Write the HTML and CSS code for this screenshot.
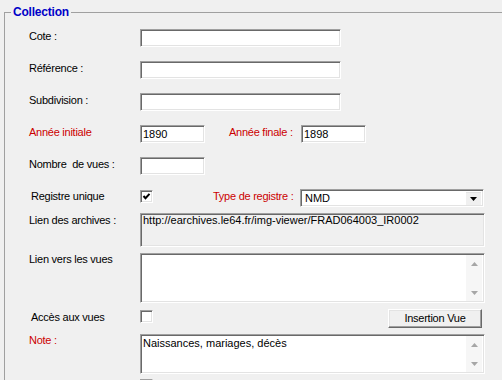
FILE: index.html
```html
<!DOCTYPE html>
<html lang="fr">
<head>
<meta charset="utf-8">
<link rel="stylesheet" href="styles.css">
</head>
<body>
<fieldset class="group">
  <legend class="title">Collection</legend>
  <div class="row first"><span class="lbl">Cote :</span><div class="box w200"></div></div>
  <div class="row"><span class="lbl">Référence :</span><div class="box w200"></div></div>
  <div class="row"><span class="lbl">Subdivision :</span><div class="box w200"></div></div>
  <div class="row"><span class="lbl red">Année initiale</span><div class="box w64">1890</div><span class="lbl2 red fin">Année finale :</span><div class="box w64">1898</div></div>
  <div class="row"><span class="lbl">Nombre&nbsp; de vues :</span><div class="box w64"></div></div>
  <div class="row"><span class="lbl shift">Registre unique</span><span class="check"><svg width="9" height="9" viewBox="0 0 9 9"><polyline points="1.5,4 3.5,6.2 7.5,1.8" fill="none" stroke="#000" stroke-width="2"/></svg></span><span class="lbl2 red type">Type de registre :</span><div class="box select"><span class="txt">NMD</span><span class="drop"><svg width="7" height="4" viewBox="0 0 7 4"><polygon points="0,0 7,0 3.5,4" fill="#000"/></svg></span></div></div>
  <div class="row archives"><span class="lbl">Lien des archives :</span><div class="box ro wide">http://earchives.le64.fr/img-viewer/FRAD064003_IR0002</div></div>
  <div class="row vues"><span class="lbl top">Lien vers les vues</span><div class="box area wide tall50"><span class="txt"></span><span class="sb"><svg width="7" height="4" viewBox="0 0 7 4"><polygon points="0,4 7,4 3.5,0" fill="#a6a6a6"/></svg><svg width="7" height="4" viewBox="0 0 7 4"><polygon points="0,0 7,0 3.5,4" fill="#a6a6a6"/></svg></span></div></div>
  <div class="row acces"><span class="lbl shift">Accès aux vues</span><span class="check"></span><button class="btn">Insertion Vue</button></div>
  <div class="row note"><span class="lbl red top">Note :</span><div class="box area wide tall40"><span class="txt">Naissances, mariages, décès</span><span class="sb"><svg width="7" height="4" viewBox="0 0 7 4"><polygon points="0,4 7,4 3.5,0" fill="#a6a6a6"/></svg><svg width="7" height="4" viewBox="0 0 7 4"><polygon points="0,0 7,0 3.5,4" fill="#a6a6a6"/></svg></span></div></div>
  <div class="row last"><span class="lbl"></span><span class="check"></span></div>
</fieldset>
</body>
</html>
```

FILE: styles.css
```css
html, body {
  margin: 0;
  padding: 0;
  overflow: hidden;
  background: #f0f0f0;
}
body {
  font-family: "Liberation Sans", Arial, sans-serif;
  font-size: 11px;
  color: #000;
  width: 502px;
  height: 380px;
}
.group {
  margin: 5px -20px 0 4px;
  padding: 0;
  border: 1px solid #a0a0a0;
  min-width: 0;
}
.title {
  margin-left: 6px;
  padding: 0 2px;
  font-size: 12px;
  line-height: 14px;
  font-weight: bold;
  color: #0000c8;
  letter-spacing: -0.2px;
}
.row {
  display: flex;
  align-items: flex-start;
  height: 18px;
  margin-top: 14px;
  padding-left: 24px;
}
.row.first { margin-top: 10px; }
.row.archives { margin-top: 6px; height: 34px; }
.row.vues { margin-top: 6px; height: 50px; }
.row.acces { margin-top: 6px; height: 19px; }
.row.note { margin-top: 6px; height: 40px; }
.row.last { margin-top: 4px; height: 2px; overflow: hidden; }
.lbl {
  width: 111px;
  flex: none;
  line-height: 13px;
  padding-top: 1px;
  letter-spacing: -0.25px;
  white-space: nowrap;
}
.lbl.shift { width: 109px; padding-left: 2px; }
.lbl.top { padding-top: 0; }
.acces .lbl { padding-top: 2px; }
.lbl2 {
  line-height: 13px;
  padding-top: 1px;
  letter-spacing: -0.25px;
  white-space: nowrap;
  flex: none;
}
.fin { width: 72px; margin-left: 24px; }
.type { width: 87px; margin-left: 60px; }
.red { color: #cc0000; }
.box {
  box-sizing: border-box;
  height: 18px;
  background: #fff;
  border: 1px solid;
  border-color: #a0a0a0 #ffffff #ffffff #a0a0a0;
  box-shadow: inset 1px 1px 0 #696969, inset -1px -1px 0 #e3e3e3;
  padding: 2px 0 0 2px;
  line-height: 13px;
  white-space: nowrap;
  overflow: hidden;
  flex: none;
}
.w200 { width: 201px; }
.w64 { width: 65px; }
.wide { width: 345px; }
.select {
  width: 184px;
  display: flex;
  justify-content: space-between;
  padding: 2px 2px 2px 4px;
}
.drop {
  box-sizing: border-box;
  width: 15px;
  height: 13px;
  background: #f0f0f0;
  border-top: 1px solid #e3e3e3;
  display: flex;
  align-items: center;
  justify-content: center;
}
.ro {
  height: 34px;
  background: #f0f0f0;
  padding: 0 0 0 2px;
}
.area {
  display: flex;
  justify-content: space-between;
  padding: 2px;
}
.tall50 { height: 50px; }
.tall40 { height: 40px; }
.area .txt { flex: 1; }
.sb {
  width: 16px;
  background: #f6f6f6;
  display: flex;
  flex-direction: column;
  justify-content: space-between;
  align-items: center;
  padding: 7px 0 6px 0;
  box-sizing: border-box;
  margin-top: -1px;
  margin-bottom: -1px;
}
.check {
  box-sizing: border-box;
  width: 13px;
  height: 13px;
  flex: none;
  margin-top: 1px;
  background: #fff;
  border: 1px solid;
  border-color: #a0a0a0 #ffffff #ffffff #a0a0a0;
  box-shadow: inset 1px 1px 0 #696969, inset -1px -1px 0 #e3e3e3;
  display: flex;
  align-items: center;
  justify-content: center;
}
.acces .check { margin-top: 1px; }
.btn {
  box-sizing: border-box;
  margin: 0 0 0 235px;
  width: 94px;
  height: 19px;
  padding: 0;
  font-family: "Liberation Sans", Arial, sans-serif;
  font-size: 11px;
  letter-spacing: -0.25px;
  line-height: 13px;
  color: #000;
  background: #f0f0f0;
  border: 1px solid;
  border-color: #ffffff #696969 #696969 #ffffff;
  box-shadow: inset -1px -1px 0 #a0a0a0, inset 1px 1px 0 #e3e3e3;
  border-radius: 0;
}
```
